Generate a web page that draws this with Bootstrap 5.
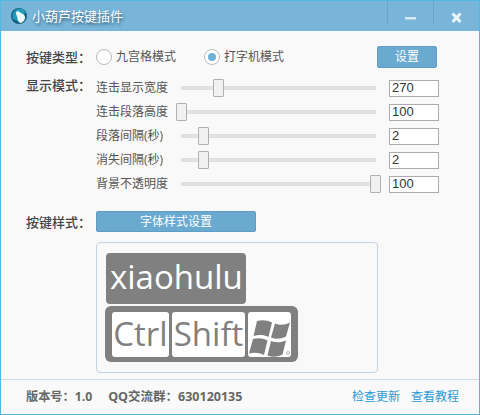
<!DOCTYPE html>
<html lang="zh">
<head>
<meta charset="utf-8">
<title>小葫芦按键插件</title>
<link rel="stylesheet" href="https://cdn.jsdelivr.net/npm/bootstrap@5.3.0/dist/css/bootstrap.min.css">
<style>
html,body{margin:0;height:415px;overflow:hidden;background:#f9f9f9}
body{font-family:"Open Sans","Noto Sans CJK SC",sans-serif;font-size:12px;color:#555}
.win{width:480px;height:415px;border:1px solid #4fb9e6;background:#f9f9f9}
.tbar{height:30px;background:#78b5d9;color:#fff}
.ttitle{font-size:13px;margin-left:5px;text-shadow:1px 2px 3px rgba(30,60,80,.75);line-height:30px}
.tlogo{margin-left:10px;width:16px;height:16px}
.wbtn{width:46px;height:24px;border-left:1px solid #6aa4c6;align-self:flex-start}
.wbtn svg{display:block}
.body{padding:14px 40px 0 25px;height:348px}
.lbl{width:70px;font-size:13px;font-weight:500;color:#444;flex:none;line-height:18px}
.rowa{height:24px;margin-bottom:7px}
.radio-o{width:16px;height:16px;border-radius:50%;border:1px solid #bbb;background:#fff;flex:none;margin-right:4px;display:flex;align-items:center;justify-content:center}
.radio-o i{display:block;width:8px;height:8px;border-radius:50%;background:#6fb3db}
.optg{width:108px;color:#555;font-size:12px}
.bluebtn{background:#6aa9d0;border:1px solid #5f9dc4;color:#fff;border-radius:2px;padding:0;font-size:12px;line-height:20px}
.setb{width:60px;height:22px;margin-left:auto;margin-right:2px}
.rows{height:24px}
.sname{width:85px;flex:none;font-size:12px;color:#555}
.trk{width:195px;height:4px;background:#e2e4e3;border:1px solid #dcdedd;position:relative;flex:none}
.thumb{position:absolute;top:-8px;width:11px;height:18px;background:#f1f1f1;border:1px solid #b0b0b0;border-radius:1px}
.valb{width:50px;height:17px;margin-left:13px;background:#fff;border:1px solid #ababab;font-size:13px;line-height:14px;padding-left:2px;color:#333;font-family:"Liberation Sans",sans-serif;flex:none}
.keyrow{margin-top:15px}
.fontb{width:160px;height:21px;margin-left:0}
.prev{margin-left:70px;margin-top:10px;width:282px;height:131px;border:1px solid #c4d3e2;border-radius:4px;padding:10px 0 0 9px}
.k1{width:140px;height:51px;background:#808080;border-radius:4px;color:#fff;font-size:33px;line-height:48px;padding-left:4px}
.kg{margin-top:2px;margin-left:-1px;width:193px;height:56px;background:#808080;border-radius:6px;padding:6px 6px 5px 7px;gap:3px}
.ke{background:#fff;border-radius:3px;height:45px;color:#808080;font-size:33px;line-height:43px;text-align:center;overflow:hidden}
.foot{border-top:1px solid #cfdde8;height:35px;padding:0 20px 0 25px;font-size:12px}
.fb{font-weight:700;color:#666;font-size:12.5px}
.fver{font-size:12.2px;margin-right:16px}
.fl{color:#2b9ad6;text-decoration:none}
.fl2{margin-left:11px}
</style>
</head>
<body>
<div class="win d-flex flex-column">
  <div class="tbar d-flex align-items-center">
    <svg class="tlogo" viewBox="0 0 16 16"><circle cx="8" cy="8" r="8" fill="#15607a"/><path d="M2 11A7.500 7.500 0 0 1 8 .5c3 0 5 1 6.500 3.500L9 14z" fill="#1f9bc0"/><path d="M5.500 3.500c1.700-.8 3.300 0 4 1.500 2 .4 4 1.800 4.500 3.700.3 2.200-1 5-4 6.300-2-.5-3.500-2-3.500-4.500C6.500 8 4 6 5.500 3.500z" fill="#eefaf4"/></svg>
    <span class="ttitle">小葫芦按键插件</span>
    <div class="ms-auto d-flex align-self-start">
      <div class="wbtn"><svg width="45" height="24" viewBox="0 0 45 24"><rect x="17" y="16" width="11" height="2.500" fill="#d8e9f3"/></svg></div>
      <div class="wbtn"><svg width="45" height="24" viewBox="0 0 45 24"><path d="M18.500 12.500l8 8.500M26.500 12.500l-8 8.500" stroke="#eef6fb" stroke-width="3" fill="none"/></svg></div>
    </div>
  </div>

  <div class="body">
    <div class="d-flex align-items-center rowa">
      <span class="lbl">按键类型：</span>
      <div class="d-flex align-items-center optg"><span class="radio-o"></span>九宫格模式</div>
      <div class="d-flex align-items-center"><span class="radio-o"><i></i></span>打字机模式</div>
      <button class="bluebtn setb" type="button">设置</button>
    </div>

    <div class="d-flex">
      <span class="lbl">显示模式：</span>
      <div class="flex-grow-1">
        <div class="d-flex align-items-center rows"><span class="sname">连击显示宽度</span><div class="trk"><div class="thumb" style="left:31px"></div></div><div class="valb">270</div></div>
        <div class="d-flex align-items-center rows"><span class="sname">连击段落高度</span><div class="trk"><div class="thumb" style="left:-6px"></div></div><div class="valb">100</div></div>
        <div class="d-flex align-items-center rows"><span class="sname">段落间隔(秒)</span><div class="trk"><div class="thumb" style="left:16px"></div></div><div class="valb">2</div></div>
        <div class="d-flex align-items-center rows"><span class="sname">消失间隔(秒)</span><div class="trk"><div class="thumb" style="left:16px"></div></div><div class="valb">2</div></div>
        <div class="d-flex align-items-center rows"><span class="sname">背景不透明度</span><div class="trk"><div class="thumb" style="left:188px"></div></div><div class="valb">100</div></div>
      </div>
    </div>

    <div class="d-flex align-items-center keyrow">
      <span class="lbl">按键样式：</span>
      <button class="bluebtn fontb" type="button">字体样式设置</button>
    </div>
    <div class="prev">
      <div class="k1">xiaohulu</div>
      <div class="kg d-flex">
        <div class="ke" style="width:57px">Ctrl</div>
        <div class="ke" style="width:73px">Shift</div>
        <div class="ke" style="width:43px">
          <svg width="43" height="45" viewBox="0 0 43 45"><path d="M9 6c5-1.500 10-1 15 1.500L20.500 22C15.500 19.500 10.500 19.500 5.500 21zM27 8.500c5 2 10 1.500 15-1L38 21.500c-5 2.500-10 3-15 1zM5 24c5-1.500 10-1 14.500 1.500L16 40c-5-2.500-10-3-15-1.500zM23 26c5 2 10 1.500 15-.5L34.500 39.500c-5 2.500-10 3-15 1z" fill="#808080"/><circle cx="40" cy="38" r="1.500" fill="none" stroke="#999" stroke-width=".7"/></svg>
        </div>
      </div>
    </div>
  </div>

  <div class="foot d-flex align-items-center">
    <span class="fb fver">版本号：1.0</span>
    <span class="fb">QQ交流群：630120135</span>
    <a class="fl ms-auto" href="#">检查更新</a>
    <a class="fl fl2" href="#">查看教程</a>
  </div>
</div>
<script src="https://cdn.jsdelivr.net/npm/bootstrap@5.3.0/dist/js/bootstrap.bundle.min.js"></script>
</body>
</html>
